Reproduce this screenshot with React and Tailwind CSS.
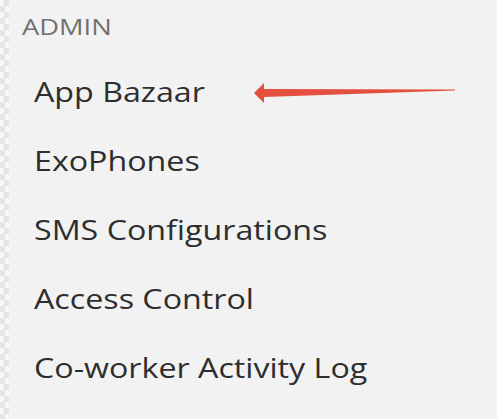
export default function App() {
  const items = [
    "App Bazaar",
    "ExoPhones",
    "SMS Configurations",
    "Access Control",
    "Co-worker Activity Log",
  ];
  return (
    <div className="flex h-[419px] w-[497px] overflow-hidden bg-[#f2f2f2] font-['Open_Sans',sans-serif]">
      {/* checkered left edge */}
      <div className="h-full w-[9px] shrink-0 bg-[conic-gradient(#e3e5e8_25%,#f8f8f8_0_50%,#e3e5e8_0_75%,#f8f8f8_0)] bg-[length:9px_12px]" />
      <div className="relative flex-1 pl-[13px] pt-[12px]">
        <div className="origin-left scale-x-[1.24] text-[22px] leading-[28px] text-[#707070]">ADMIN</div>
        <ul className="mt-[37px] flex flex-col gap-[40px] pl-[12px]">
          {items.map((t) => (
            <li key={t} className="origin-left scale-x-[1.15] text-[28px] leading-[29px] text-[#2e2e2e]">
              {t}
            </li>
          ))}
        </ul>
        <svg
          className="absolute left-[245px] top-[82px]"
          width="205"
          height="22"
          viewBox="0 0 205 22"
        >
          <path
            d="M0 11 L10 1 L10 7 L201 7.5 L201 8.5 L10 15 L10 21 Z"
            fill="#e4503f"
          />
        </svg>
      </div>
    </div>
  );
}
